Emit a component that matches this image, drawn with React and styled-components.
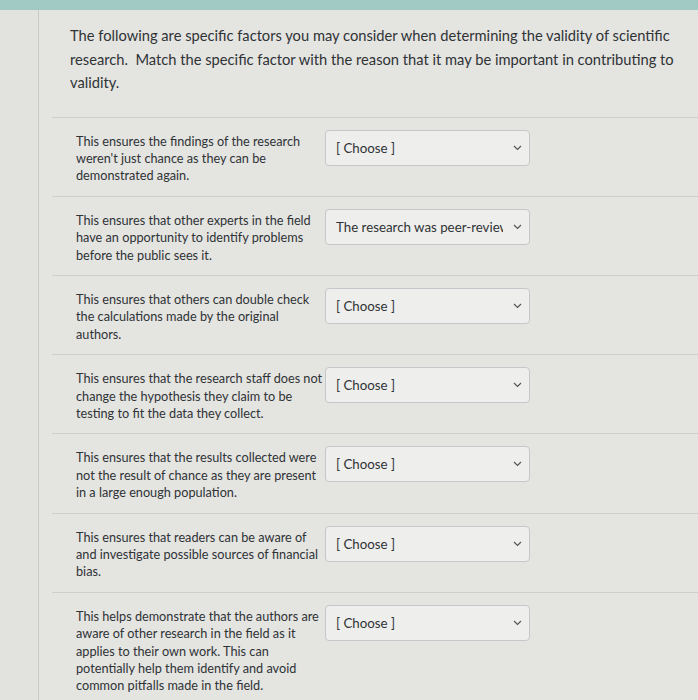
import React from 'react'
import styled, { createGlobalStyle } from 'styled-components'

const GlobalStyle = createGlobalStyle`
  html, body {
    margin: 0;
    padding: 0;
    background: #e4e4e1;
    font-family: Lato, "Open Sans", "Liberation Sans", sans-serif;
    color: #2f3336;
  }
`

const TopBar = styled.div`
  height: 10px;
  background: #a2cac5;
`

const Layout = styled.div`
  display: flex;
  min-height: 690px;
`

const SideStrip = styled.div`
  width: 38px;
  flex: none;
  background: #e2e2df;
  border-right: 1px solid #c9c9c5;
`

const Content = styled.div`
  flex: 1;
  padding-left: 13px;
`

const Intro = styled.p`
  margin: 0;
  padding: 14px 8px 22px 18px;
  font-size: 14.7px;
  line-height: 23.5px;
  color: #2f3336;
`

const Row = styled.div`
  display: flex;
  align-items: flex-start;
  padding: 12px 0 11px 24px;
  border-top: 1px solid #cdcfcf;
  &:last-child {
    border-bottom: 1px solid #cdcfcf;
  }
`

const Statement = styled.div`
  width: 248px;
  flex: none;
  margin-top: 3px;
  font-size: 12.7px;
  line-height: 17.4px;
  color: #2f3336;
`

const SelectWrap = styled.div`
  position: relative;
  width: 205px;
  margin-left: 1px;
`

const Select = styled.select`
  appearance: none;
  width: 100%;
  height: 36px;
  padding: 0 26px 0 10px;
  border: 1px solid #c4c8ca;
  border-radius: 4px;
  background: #eeeeec;
  font-family: Lato, "Open Sans", "Liberation Sans", sans-serif;
  font-size: 13.3px;
  color: #2f3336;
  white-space: nowrap;
  overflow: hidden;
`

const Chevron = styled.svg`
  position: absolute;
  right: 8px;
  top: 15px;
  width: 9px;
  height: 6px;
  pointer-events: none;
`

const rows = [
  { text: "This ensures the findings of the research weren't just chance as they can be demonstrated again.", value: '' },
  { text: 'This ensures that other experts in the field have an opportunity to identify problems before the public sees it.', value: 'peer' },
  { text: 'This ensures that others can double check the calculations made by the original authors.', value: '' },
  { text: 'This ensures that the research staff does not change the hypothesis they claim to be testing to fit the data they collect.', value: '' },
  { text: 'This ensures that the results collected were not the result of chance as they are present in a large enough population.', value: '' },
  { text: 'This ensures that readers can be aware of and investigate possible sources of financial bias.', value: '' },
  { text: 'This helps demonstrate that the authors are aware of other research in the field as it applies to their own work. This can potentially help them identify and avoid common pitfalls made in the field.', value: '' },
]

function MatchRow({ text, value }) {
  return (
    <Row>
      <Statement>{text}</Statement>
      <SelectWrap>
        <Select defaultValue={value}>
          <option value="">[ Choose ]</option>
          <option value="peer">The research was peer-reviewed</option>
          <option value="rep">The research was replicated</option>
          <option value="data">The raw data was published</option>
        </Select>
        <Chevron viewBox="0 0 9 6">
          <path d="M1 1l3.5 3.5L8 1" fill="none" stroke="#555" strokeWidth="1.2" />
        </Chevron>
      </SelectWrap>
    </Row>
  )
}

export default function App() {
  return (
    <>
      <GlobalStyle />
      <TopBar />
      <Layout>
        <SideStrip />
        <Content>
          <Intro>
            The following are specific factors you may consider when determining the validity of scientific
            research.&nbsp; Match the specific factor with the reason that it may be important in contributing to
            validity.
          </Intro>
          {rows.map((r, i) => (
            <MatchRow key={i} text={r.text} value={r.value} />
          ))}
        </Content>
      </Layout>
    </>
  )
}
